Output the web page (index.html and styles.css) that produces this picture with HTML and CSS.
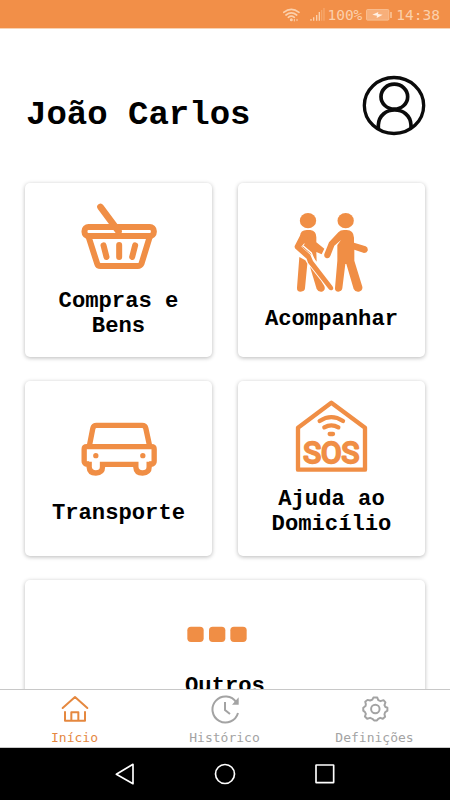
FILE: index.html
```html
<!DOCTYPE html>
<html lang="pt">
<head>
<meta charset="utf-8">
<title>Início</title>
<link rel="stylesheet" href="styles.css">
</head>
<body>
<div class="app">
  <header class="status">
    <svg class="wifi" viewBox="0 0 51 42" width="17" height="14" fill="none" stroke="currentColor" stroke-width="5" stroke-linecap="round">
      <path d="M2 13Q25-5 48 13M9 21Q25 8 41 21M16 28Q25 21 34 28"/><circle cx="25" cy="35" r="2"/>
      <path d="M34 34v5M42 34v4" stroke-width="3"/>
    </svg>
    <svg class="signal" viewBox="0 0 45 39" width="15" height="13" fill="currentColor">
      <path d="M1 33h4v5H1zM9 28h4v10H9zM18 21h4v17h-4zM26 12h4v26h-4z"/><path opacity=".35" d="M33 6h4v32h-4zM40 0h4v38h-4z"/>
    </svg>
    <span class="percent">100%</span>
    <svg class="battery" viewBox="0 0 78 36" width="26" height="12">
      <rect x="1.500" y="1.500" width="67" height="32" rx="3" fill="currentColor" fill-opacity=".5" stroke="currentColor" stroke-opacity=".6" stroke-width="3"/>
      <path d="M73 9h4v18h-4z" fill="currentColor"/><path d="M19 17l18-8-1 6 14 2-18 10 1-7z" fill="#fff0e4"/>
    </svg>
    <span class="clock">14:38</span>
  </header>

  <main class="content">
    <div class="profile">
      <h1>João Carlos</h1>
      <svg class="avatar" viewBox="36 30 192 183" width="64" height="61" fill="none" stroke="#0b0b0b">
        <ellipse cx="132" cy="121.500" rx="89" ry="84" stroke-width="10"/>
        <ellipse cx="133" cy="95" rx="40" ry="37.500" stroke-width="11"/>
        <path d="M85 191V180C88 120 180 120 183 180v11" stroke-width="11"/>
      </svg>
    </div>

    <div class="grid">
      <section class="card card-basket">
        <svg class="icon" viewBox="175.500 60 270 270" fill="none" stroke="#f08e45" stroke-linecap="round" stroke-linejoin="round">
          <rect x="207" y="156" width="208" height="27" rx="12" stroke-width="18"/>
          <path d="M255 96L309 169" stroke-width="20"/>
          <path d="M220 188L245 266Q247 273 255 273H367Q375 273 378 266L402 188" stroke-width="18"/>
          <path d="M264 211L273 246M311 210V246M359 211L350 246" stroke-width="18"/>
        </svg>
        <h2>Compras e<br>Bens</h2>
      </section>

      <section class="card card-walk">
        <svg class="icon" viewBox="171 96 270 270" fill="#f08e45">
          <ellipse cx="234" cy="137" rx="24.500" ry="23"/><ellipse cx="347" cy="137" rx="24.500" ry="23"/>
          <path d="M210 184Q211 165 230 165H241Q259 167 259 187V202L283 221 275 238 259 231 260 260 246 241 216 216 224 207Z"/>
          <path d="M211 180L194 213Q193 219 198 223L230 251 234 263 296 342Q302 349 308 344 312 340 307 333L249 258 241 239 214 215 235 190Z"/>
          <path d="M208 246L226 256 232 266 225 340Q224 350 212 350 200 350 201 338Z"/>
          <path d="M240 275L273 317 283 333Q288 346 276 350 265 352 260 342Z"/>
          <path d="M219 212L244 234 253 256" fill="none" stroke="#fff" stroke-width="4"/>
          <path d="M325 172Q331 165 342 165H350Q371 166 372 188V203L407 214Q415 218 413 227 410 234 402 234L373 224V257L397 335Q399 346 387 350 376 352 371 342L349 267H346L337 340Q335 350 325 350 314 350 315 339L322 257V210L333 195 313 212 301 243Q297 252 288 249 281 246 283 237L297 202Z"/>
        </svg>
        <h2>Acompanhar</h2>
      </section>

      <section class="card card-car">
        <svg class="icon" viewBox="175.500 90 270 270" fill="none" stroke="#f08e45" stroke-width="16" stroke-linejoin="round">
          <path d="M222 211L232 160Q234 151 243 151H380Q389 151 391 160L402 211"/>
          <path d="M221 267H211Q206 264 206 258V222Q206 215 214 215H408Q416 215 416 222V258Q416 264 411 267H401"/>
          <path d="M221 260V276Q222 294 241 294 261 293 261 276V260M361 260V276Q362 294 381 294 401 293 401 276V260M261 268H361"/>
          <g fill="#f08e45" stroke="none"><circle cx="241" cy="242" r="8"/><circle cx="382" cy="242" r="8"/></g>
        </svg>
        <h2>Transporte</h2>
      </section>

      <section class="card card-home">
        <svg class="icon" viewBox="171 48 270 270" fill="none" stroke="#f08e45" stroke-width="13" stroke-linejoin="round" stroke-linecap="round">
          <path d="M204 158L304 83 405 158V284H204Z"/>
          <path d="M269 138Q304 115 339 138M283 157Q304 145 325 157M299 177H309"/>
          <text x="304" y="263" text-anchor="middle" textLength="168" lengthAdjust="spacingAndGlyphs" class="sos">SOS</text>
        </svg>
        <h2>Ajuda ao<br>Domicílio</h2>
      </section>

      <section class="card card-more">
        <svg class="dots" viewBox="495 147 270 90" width="90" height="30" fill="#f08e45">
          <rect x="517" y="170" width="49" height="46" rx="11"/><rect x="582" y="170" width="49" height="46" rx="11"/><rect x="646" y="170" width="49" height="46" rx="11"/>
        </svg>
        <h2>Outros</h2>
      </section>
    </div>
  </main>

  <nav class="tabs">
    <a class="tab active">
      <svg viewBox="0 0 90 90" width="30" height="30" fill="none" stroke="currentColor" stroke-width="6" stroke-linecap="round" stroke-linejoin="round">
        <path d="M8 42L45 9 82 42M15 54V80H75V54M34 79V55H55V79"/>
      </svg>
      <span>Início</span>
    </a>
    <a class="tab">
      <svg viewBox="0 0 90 90" width="30" height="30" fill="none" stroke="currentColor" stroke-width="6">
        <path d="M79 25A39 39 0 1 0 84 57M45 24V48L60 60"/><path d="M86 10V32H66Z" fill="currentColor" stroke="none"/>
      </svg>
      <span>Histórico</span>
    </a>
    <a class="tab">
      <svg viewBox="-1 1 92 92" width="30" height="30" fill="none" stroke="currentColor" stroke-width="6" stroke-linejoin="round">
        <path d="M40 12H52L55 20 62 23 71 20 77 27 74 35 77 41 83 43V52L76 57 74 63 76 71 69 77 61 74 55 77 51 82H42L37 77 30 74 21 77 14 70 17 62 14 56 9 52V43L16 38 17 32 15 25 22 19 30 21 37 18Z"/>
        <circle cx="46" cy="47" r="13"/>
      </svg>
      <span>Definições</span>
    </a>
  </nav>

  <footer class="system">
    <svg viewBox="0 0 60 72" width="20" height="24"><path d="M4 37L54 7V65Z"/></svg>
    <svg viewBox="0 0 72 72" width="24" height="24"><circle cx="36" cy="36" r="28.500"/></svg>
    <svg viewBox="0 0 60 72" width="20" height="24"><rect x="3" y="9" width="53" height="53" rx="1"/></svg>
  </footer>
</div>
</body>
</html>
```
FILE: styles.css
```css
* {
  box-sizing: border-box;
}

body {
  margin: 0;
  background: #fff;
  font-family: "Liberation Mono", monospace;
}

.app {
  display: flex;
  flex-direction: column;
  width: 450px;
  height: 800px;
  overflow: hidden;
}

.status {
  display: flex;
  flex: none;
  align-items: center;
  justify-content: flex-end;
  height: 29px;
  padding: 1px 10px 0 0;
  border-bottom: 1px solid #f8d3b5;
  background: #f28f48;
  color: #fbd0ac;
  font: 14.5px/28px "DejaVu Sans Mono", monospace;
}

.signal {
  margin-left: 10px;
}

.percent {
  margin-left: 2px;
}

.battery {
  margin: 0 4px;
}

.content {
  flex: 1;
  min-height: 0;
  overflow: hidden;
  padding: 0 25px;
}

.profile {
  display: flex;
  align-items: flex-start;
  justify-content: space-between;
  height: 154px;
  padding-top: 46px;
}

h1 {
  margin: 20px 0 0 1px;
  font-size: 34px;
  line-height: 40px;
  white-space: nowrap;
}

.avatar {
  margin-right: -1px;
}

.grid {
  display: grid;
  grid-template-columns: 187px 187px;
  grid-template-rows: 174px 175px 175px;
  gap: 24px 26px;
}

.card {
  display: flex;
  flex-direction: column;
  align-items: center;
  border-radius: 5px;
  background: #fff;
  box-shadow: 0 1px 4px rgba(0, 0, 0, 0.28);
}

.icon {
  flex: none;
  width: 90px;
  height: 90px;
}

h2 {
  margin: 0;
  font-size: 22.2px;
  line-height: 25px;
  text-align: center;
  white-space: nowrap;
}

.card-basket {
  padding-top: 12px;
}

.card-basket h2 {
  margin-top: 4px;
}

.card-walk {
  padding-top: 24px;
}

.card-walk h2 {
  margin-top: 10px;
}

.card-car {
  padding-top: 24px;
}

.card-car h2 {
  margin-top: 6px;
}

.card-home {
  padding-top: 10px;
}

.card-home h2 {
  margin-top: 6px;
}

.card-more {
  grid-column: span 2;
  padding-top: 39px;
}

.card-more h2 {
  margin-top: 25px;
}

.sos {
  fill: #f08e45;
  stroke-width: 7px;
  font: 400 88px Roboto, sans-serif;
}

.tabs {
  display: grid;
  flex: none;
  grid-template-columns: repeat(3, 150px);
  height: 59px;
  border-top: 1px solid #c8c8c8;
  border-bottom: 1px solid #c8c8c8;
  background: #fff;
}

.tab {
  display: flex;
  flex-direction: column;
  align-items: center;
  padding: 4px 1px 0 0;
  color: #a3a3a3;
  font: 13px/16px "DejaVu Sans Mono", monospace;
}

.tab span {
  margin-top: 6px;
}

.tab.active {
  color: #e5883f;
}

.system {
  display: flex;
  flex: none;
  align-items: center;
  justify-content: center;
  gap: 78px;
  height: 52px;
  background: #000;
}

.system svg {
  fill: none;
  stroke: #fff;
  stroke-width: 5px;
  stroke-linejoin: round;
}
```
